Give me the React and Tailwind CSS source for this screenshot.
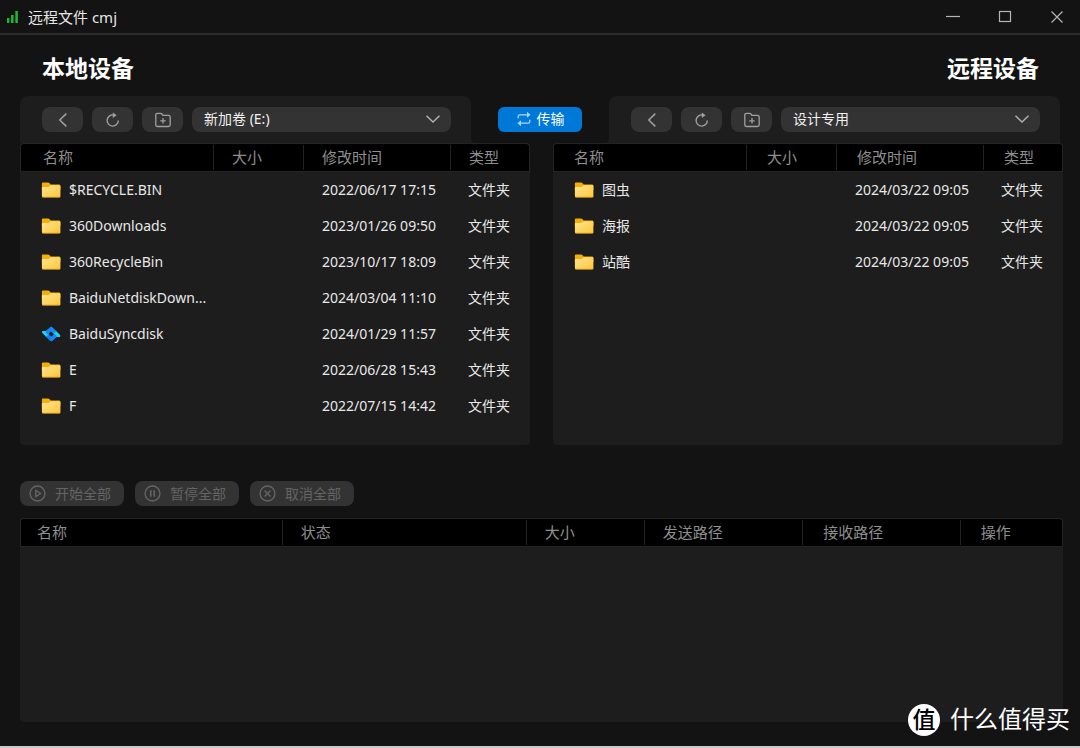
import { useState } from 'react';
import clsx from 'clsx';

const localFiles = [
  { name: '$RECYCLE.BIN', time: '2022/06/17 17:15' },
  { name: '360Downloads', time: '2023/01/26 09:50' },
  { name: '360RecycleBin', time: '2023/10/17 18:09' },
  { name: 'BaiduNetdiskDown...', time: '2024/03/04 11:10' },
  { name: 'BaiduSyncdisk', time: '2024/01/29 11:57', icon: 'sync' },
  { name: 'E', time: '2022/06/28 15:43' },
  { name: 'F', time: '2022/07/15 14:42' },
];

const remoteFiles = [
  { name: '图虫', time: '2024/03/22 09:05' },
  { name: '海报', time: '2024/03/22 09:05' },
  { name: '站酷', time: '2024/03/22 09:05' },
];

const localColumns = [
  { label: '名称', width: 'w-[193px]', pad: 'pl-[22px]' },
  { label: '大小', width: 'w-[90px]', pad: 'pl-[18px]' },
  { label: '修改时间', width: 'w-[147px]', pad: 'pl-[18px]' },
  { label: '类型', width: '', pad: 'pl-[18px]' },
];

const remoteColumns = [
  { label: '名称', width: 'w-[193px]', pad: 'pl-5' },
  { label: '大小', width: 'w-[90px]', pad: 'pl-5' },
  { label: '修改时间', width: 'w-[147px]', pad: 'pl-5' },
  { label: '类型', width: '', pad: 'pl-5' },
];

const queueColumns = [
  { label: '名称', width: 'w-[25.1%]', pad: 'pl-4' },
  { label: '状态', width: 'w-[23.4%]', pad: 'pl-[18px]' },
  { label: '大小', width: 'w-[11.3%]', pad: 'pl-[18px]' },
  { label: '发送路径', width: 'w-[15.2%]', pad: 'pl-[18px]' },
  { label: '接收路径', width: 'w-[15.1%]', pad: 'pl-5' },
  { label: '操作', width: '', pad: 'pl-5' },
];

function FolderIcon() {
  return (
    <svg width="20" height="16" viewBox="0 0 20 16" className="shrink-0" aria-hidden="true">
      <defs>
        <linearGradient id="folder" x1="0" y1="0" x2="1" y2="1">
          <stop offset="0" stopColor="#ffe591" />
          <stop offset="1" stopColor="#fdc63a" />
        </linearGradient>
      </defs>
      <path d="M2 .5h5c.6 0 1 .2 1.4.6l1.2 1.3H18c.8 0 1.4.6 1.4 1.4V8H.9V1.6C.9.9 1.3.5 2 .5z" fill="#f4ae0c" />
      <path
        d="M.9 6.2c0-.7.4-1.1 1.1-1.1h5c.5 0 .9-.2 1.3-.5l1.1-1c.3-.3.6-.4 1-.4h7.8c.7 0 1.2.5 1.2 1.2v9.5c0 .8-.5 1.3-1.3 1.3H2.2c-.8 0-1.3-.5-1.3-1.3z"
        fill="url(#folder)"
      />
      <path d="M1.1 14.6c.3.4.7.6 1.2.6H18c.6 0 1-.2 1.3-.6" fill="none" stroke="#e2a11c" strokeWidth=".8" />
    </svg>
  );
}

function SyncIcon() {
  return (
    <svg width="20" height="16" viewBox="0 0 20 16" className="shrink-0" aria-hidden="true">
      <path d="M9.2 1.2c.7-.6 1.4-.6 2 0l4.6 4.4-2.7 2.7-3.5-3-3.3 3.2L3.6 6z" fill="#1a8cf5" />
      <path d="M11.2 14.9c-.7.6-1.4.6-2 0L4.4 10.3l2.7-2.7 3.5 3.2 3.3-3.2L16.6 10z" fill="#0d80fa" />
      <path d="M1.4 5h3.4l3.1 2.9-2.8 2.8L1.6 7.2C.8 6.300.7 5.300 1.4 5z" fill="#20d3f0" />
      <path d="M18.800 10.900h-3.200l-3.200-2.900 2.800-2.700 3.500 3.300c.8.9.8 1.900.1 2.300z" fill="#20d3f0" />
      <path d="m9.300 1.200-5 4.700 2.400 2.500 3.800-3.600zM11.100 14.900l4.900-4.700-2.300-2.500-3.800 3.600z" fill="#1387fb" />
    </svg>
  );
}

function Icon({ children, size = 16, strokeWidth = 1.2, className }) {
  return (
    <svg
      width={size}
      height={size}
      viewBox="0 0 16 16"
      fill="none"
      stroke="currentColor"
      strokeWidth={strokeWidth}
      className={clsx('shrink-0', className)}
      aria-hidden="true"
    >
      {children}
    </svg>
  );
}

function ToolButton({ label, children }) {
  return (
    <button
      aria-label={label}
      className="flex h-[25px] w-[41px] shrink-0 items-center justify-center rounded-lg bg-[#333333] text-[#a0a0a0] hover:bg-[#3d3d3d]"
    >
      {children}
    </button>
  );
}

function Toolbar({ label, options, flare }) {
  const [value, setValue] = useState(options[0]);

  return (
    <div className="relative flex h-[47px] flex-1 items-center gap-[9px] rounded-t-lg bg-[#1d1d1d] pr-5 pl-[22px]">
      <ToolButton label="返回">
        <Icon strokeWidth={1.5}>
          <path d="M11.300 1.600 4.800 8l6.500 6.400" />
        </Icon>
      </ToolButton>
      <ToolButton label="刷新">
        <Icon strokeWidth={1.4}>
          <path d="M8.600 3A5.600 5.600 0 1 0 13.300 8.500" />
          <path d="M7.800.4 11.600 3.200 7.800 6z" fill="currentColor" stroke="none" />
        </Icon>
      </ToolButton>
      <ToolButton label="新建文件夹">
        <Icon strokeWidth={1.3}>
          <path d="M.8 3c0-1 .7-1.700 1.700-1.700h3.100c.5 0 .8.200 1.100.5l1.200 1.600h5.500c1.100 0 1.800.7 1.800 1.700v7.600c0 1.100-.7 1.800-1.800 1.800H2.600c-1.100 0-1.800-.7-1.800-1.800zM8 6.100v5.400M5.300 8.800h5.400" />
        </Icon>
      </ToolButton>
      <div className="relative min-w-0 flex-1">
        <select
          aria-label={label}
          value={value}
          onChange={(e) => setValue(e.target.value)}
          className="block h-[25px] w-full appearance-none rounded-lg bg-[#333333] pr-8 pb-0.5 pl-3 text-sm leading-[23px] text-[#f0f0f0]"
        >
          {options.map((option) => (
            <option key={option}>{option}</option>
          ))}
        </select>
        <Icon strokeWidth={1.5} className="pointer-events-none absolute top-1 right-[10px] text-[#b0b0b0]">
          <path d="M1.500 4.800 8 11l6.500-6.200" />
        </Icon>
      </div>
      <span
        className={clsx(
          'absolute bottom-0 size-1',
          flare === 'right'
            ? '-right-1 bg-[radial-gradient(circle_at_top_right,transparent_4px,#1d1d1d_4px)]'
            : '-left-1 bg-[radial-gradient(circle_at_top_left,transparent_4px,#1d1d1d_4px)]'
        )}
      />
    </div>
  );
}

function HeadRow({ columns }) {
  return (
    <thead>
      <tr className="h-[29px] text-left text-[15px] leading-5 text-[#8e8e8e]">
        {columns.map((col, i) => (
          <th
            key={i}
            className={clsx(
              'border-y border-[#242424] bg-black p-0 font-normal first:rounded-tl first:border-l last:rounded-tr last:border-r',
              col.width
            )}
          >
            <div className={clsx('h-[25px] leading-[25px]', i > 0 && 'border-l border-[#222222]', col.pad)}>
              {col.label}
            </div>
          </th>
        ))}
      </tr>
    </thead>
  );
}

function FileTable({ files, columns, label }) {
  return (
    <div className="min-h-[302px] min-w-0 flex-1 rounded bg-[#1d1d1d]">
      <table aria-label={label} className="w-full table-fixed border-separate border-spacing-0">
        <HeadRow columns={columns} />
        <tbody>
          {files.map((file) => (
            <tr key={file.name} className="h-9 text-sm text-[#e8e8e8] hover:bg-[#262626]">
              <td className="p-0 pl-[21px] whitespace-nowrap">
                <div className="flex items-center gap-2">
                  {file.icon === 'sync' ? <SyncIcon /> : <FolderIcon />}
                  <span>{file.name}</span>
                </div>
              </td>
              <td className="p-0" />
              <td className="p-0 pl-[19px] whitespace-nowrap">{file.time}</td>
              <td className="p-0 pl-[18px] whitespace-nowrap">文件夹</td>
            </tr>
          ))}
        </tbody>
      </table>
    </div>
  );
}

function QueueButton({ children, label }) {
  return (
    <button
      disabled
      className="flex h-[25px] w-[104px] items-center gap-[9px] rounded-lg bg-[#333333] pl-[9px] text-sm leading-5 text-[#646464]"
    >
      <Icon size={17} strokeWidth={1.3}>
        <circle cx="8" cy="8" r="7" />
        {children}
      </Icon>
      {label}
    </button>
  );
}

export default function App() {
  return (
    <div className="relative flex min-h-screen flex-col border-b-2 border-[#c9c9c9] bg-[#131313] font-['Noto_Sans','Noto_Sans_CJK_SC',sans-serif]">
      {/* Title bar */}
      <header className="flex h-[35px] items-center justify-between border-b-2 border-[#2c2c2c] pr-[15px] pl-[7px]">
        <div className="flex items-center gap-[10px]">
          <svg width="11" height="12" viewBox="0 0 11 12" fill="#1fb532" aria-hidden="true">
            <rect x="0" y="7" width="2.400" height="5" />
            <rect x="4" y="4" width="2.600" height="8" />
            <rect x="8.300" y="0" width="2.600" height="12" />
          </svg>
          <h1 className="text-[15px] leading-5 text-[#e6e6e6]">远程文件 cmj</h1>
        </div>
        <div className="flex items-center gap-9 text-[#b4b4b4]">
          <button aria-label="最小化">
            <Icon>
              <path d="M1 7.500h14" />
            </Icon>
          </button>
          <button aria-label="最大化">
            <Icon>
              <rect x="2.500" y="2.500" width="11" height="10" />
            </Icon>
          </button>
          <button aria-label="关闭">
            <Icon>
              <path d="m2.500 2.500 11 11M13.500 2.500l-11 11" />
            </Icon>
          </button>
        </div>
      </header>

      <main className="flex flex-1 flex-col pr-[17px] pb-6 pl-5">
        <div className="flex h-[61px] items-center justify-between pt-[5px] pr-6 pl-[22px] text-[23px] leading-8 font-bold text-white">
          <h2>本地设备</h2>
          <h2>远程设备</h2>
        </div>

        <div className="flex items-center pr-[3px]">
          <Toolbar label="本地路径" options={['新加卷 (E:)']} flare="right" />
          <div className="flex w-[138px] justify-center">
            <button className="flex h-[25px] w-[84px] items-center justify-center gap-[5px] rounded-md bg-[#0078d7] pb-0.5 text-sm leading-5 text-white hover:bg-[#1a86dc]">
              <Icon strokeWidth={1.3} className="text-[#a9d5f6]">
                <path d="M2.200 7.200V5.400c0-1 .6-1.600 1.600-1.600h7.700M13.800 8.800v1.800c0 1-.6 1.600-1.600 1.600H4.500" />
                <path d="m11 .8 3.600 3-3.600 3zM5 9.200l-3.600 3 3.600 3z" fill="currentColor" stroke="none" />
              </Icon>
              传输
            </button>
          </div>
          <Toolbar label="远程路径" options={['设计专用']} flare="left" />
        </div>

        <div className="flex gap-[23px]">
          <FileTable files={localFiles} columns={localColumns} label="本地设备" />
          <FileTable files={remoteFiles} columns={remoteColumns} label="远程设备" />
        </div>

        {/* Transfer queue */}
        <div className="mt-9 flex gap-[11px]">
          <QueueButton label="开始全部">
            <path d="M6.400 5.200v5.600L10.800 8z" />
          </QueueButton>
          <QueueButton label="暂停全部">
            <path d="M6.400 5v6M9.600 5v6" strokeWidth="1.500" />
          </QueueButton>
          <QueueButton label="取消全部">
            <path d="m5.200 5.200 5.600 5.600M10.800 5.200l-5.600 5.600" />
          </QueueButton>
        </div>
        <div className="mt-3 flex-1 rounded bg-[#1d1d1d]">
          <table aria-label="传输列表" className="w-full table-fixed border-separate border-spacing-0">
            <HeadRow columns={queueColumns} />
          </table>
        </div>
      </main>

      <div className="absolute right-[10px] bottom-[9px] flex items-center gap-[10px] text-white">
        <span className="flex size-8 items-center justify-center rounded-full bg-white pb-0.5 text-[23px] leading-8 font-medium text-black">
          值
        </span>
        <span className="pb-0.5 text-2xl leading-8">什么值得买</span>
      </div>
    </div>
  );
}
